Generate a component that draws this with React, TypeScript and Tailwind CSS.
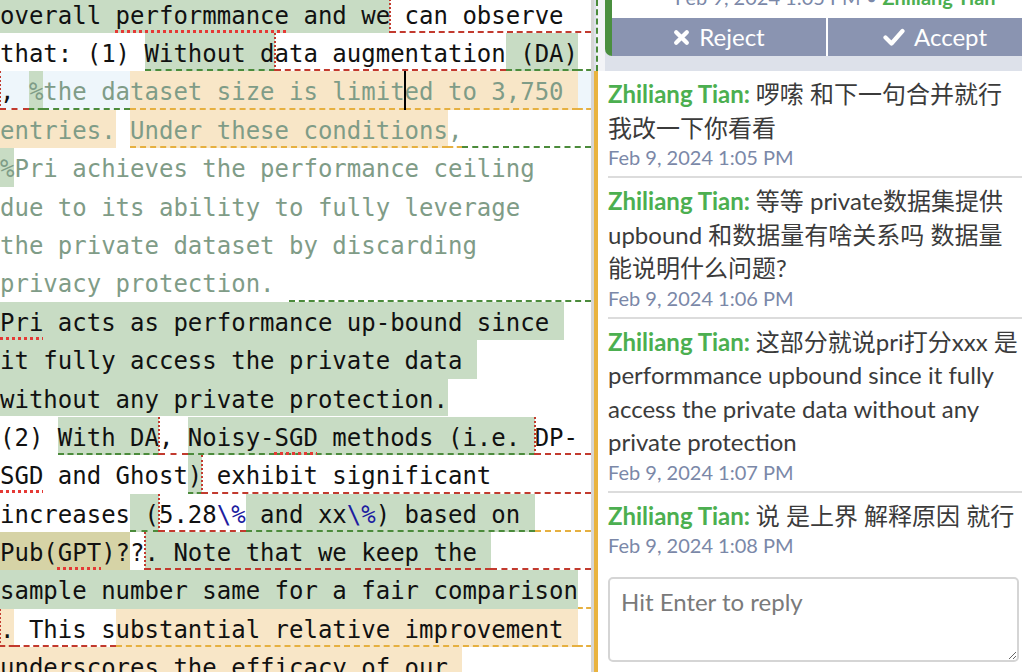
import type { ReactNode } from 'react'

// highlight + underline styles used by the track-changes view
const G = 'bg-[#c8dcc4]'
const O = 'bg-[#f8e6c7]'
const OL = 'bg-[#d6d3a6]'
const gD = 'border-b-2 border-dashed border-[#4b8b3b]'
const rD = 'border-b-2 border-dashed border-[#c23a2e]'
const oD = 'border-b-2 border-dashed border-[#e6b040]'
const sp = 'underline decoration-dotted decoration-[#e53935] decoration-[3px] underline-offset-[6px]'

function Line({ children, c = '' }: { children: ReactNode; c?: string }) {
  return <div className={`flex h-[38.4px] leading-[42px] whitespace-pre ${c}`}>{children}</div>
}

function S({ c = '', children }: { c?: string; children?: ReactNode }) {
  return <span className={c}>{children}</span>
}

// red dotted marker at the start of a deleted/changed run
const Mark = () => <span className="z-10 -mx-px w-[2px] border-l-2 border-dotted border-[#c23a2e]" />

const Pct = () => <span className="text-[#1d1da0]">\%</span>

function Editor() {
  return (
    <div className="w-[591px] shrink-0 overflow-hidden bg-white font-['DejaVu_Sans_Mono',monospace] text-[24px] text-[#111]">
      <div className="-mt-[5.4px]">
        <Line>
          <S c={G}>overall </S>
          <S c={`${G} ${sp}`}>performmance</S>
          <S c={G}> and we</S>
          <Mark />
          <S c={`${rD} flex-1`}> can observe</S>
        </Line>
        <Line>
          <S>that: (1) </S>
          <S c={`${G} ${gD}`}>Without d</S>
          <Mark />
          <S c={rD}>ata augmentation</S>
          <S c={`${G} ${gD}`}> (DA)</S>
          <S c={`${gD} flex-1`} />
        </Line>
        <Line c="bg-[#eef6fb]">
          <Mark />
          <S c={rD}>, </S>
          <S c={`${G} ${gD} text-[#7f9c87]`}>%</S>
          <S c={`${gD} text-[#7f9c87]`}>the da</S>
          <S c={`${O} ${oD} text-[#7f9c87]`}>taset size is limit</S>
          <span className="z-10 -mx-px w-[2px] bg-black" />
          <S c={`${O} ${oD} text-[#7f9c87]`}>ed to 3,750 </S>
          <S c={`${oD} flex-1`} />
        </Line>
        <Line c="text-[#7f9c87]">
          <S c={O}>entries.</S>
          <S> </S>
          <S c={`${O} ${oD}`}>Under these conditions</S>
          <S c={oD}>,</S>
          <S c={`${gD} flex-1`} />
        </Line>
        <Line c="text-[#7f9c87]">
          <S c={G}>%</S>
          <S>Pri achieves the performance ceiling</S>
        </Line>
        <Line c="text-[#7f9c87]">
          <S>due to its ability to fully leverage</S>
        </Line>
        <Line c="text-[#7f9c87]">
          <S>the private dataset by discarding</S>
        </Line>
        <Line c="text-[#7f9c87]">
          <S>privacy protection. </S>
          <S c={`${gD} flex-1`} />
        </Line>
        <Line>
          <S c={`${G} ${sp}`}>Pri</S>
          <S c={G}> acts as performance up-bound since </S>
        </Line>
        <Line>
          <S c={G}>it fully access the private data </S>
        </Line>
        <Line c="border-b border-white">
          <S c={G}>without any private protection.</S>
        </Line>
        <Line>
          <S>(2) </S>
          <S c={`${G} ${gD}`}>With DA</S>
          <Mark />
          <S c={rD}>, </S>
          <S c={`${G} ${gD}`}>Noisy-</S>
          <S c={`${G} ${gD}`}>
            <span className={sp}>SGD</span> methods (i.e.{' '}
          </S>
          <Mark />
          <S c={`${rD} flex-1`}>DP-</S>
        </Line>
        <Line>
          <S c={sp}>SGD</S>
          <S> and Ghost</S>
          <S c={`${G} ${gD}`}>)</S>
          <Mark />
          <S c={`${rD} flex-1`}> exhibit significant</S>
        </Line>
        <Line>
          <S>increases</S>
          <S c={`${G} ${gD}`}> (</S>
          <Mark />
          <S c={rD}>
            5.28<Pct />
          </S>
          <S c={`${G} ${gD}`}>
            {' '}and xx<Pct />) based on{' '}
          </S>
          <S c={`${oD} flex-1`} />
        </Line>
        <Line>
          <S c={OL}>Pub(</S>
          <S c={`${OL} ${sp}`}>GPT</S>
          <S c={OL}>)?</S>
          <S>?</S>
          <Mark />
          <S c={`${G} ${rD}`}>. Note that we keep the </S>
          <S c={`${rD} flex-1`} />
        </Line>
        <Line>
          <S c={G}>sample number same for a fair comparison</S>
          <S c={`${oD} flex-1`} />
        </Line>
        <Line>
          <Mark />
          <S c={`${O} ${rD}`}>.</S>
          <S c={rD}> This s</S>
          <S c={`${O} ${oD}`}>ubstantial relative improvement </S>
          <S c={`${oD} flex-1`} />
        </Line>
        <Line>
          <S c={O}>underscores the efficacy of our </S>
        </Line>
      </div>
    </div>
  )
}

const comments: { lines: string[]; date: string }[] = [
  { lines: ['啰嗦 和下一句合并就行', '我改一下你看看'], date: 'Feb 9, 2024 1:05 PM' },
  { lines: ['等等 private数据集提供', 'upbound 和数据量有啥关系吗 数据量', '能说明什么问题?'], date: 'Feb 9, 2024 1:06 PM' },
  {
    lines: ['这部分就说pri打分xxx 是', 'performmance upbound since it fully', 'access the private data without any', 'private protection'],
    date: 'Feb 9, 2024 1:07 PM',
  },
  { lines: ['说 是上界 解释原因 就行'], date: 'Feb 9, 2024 1:08 PM' },
]

function ReviewPanel() {
  return (
    <div className="min-w-0 flex-1 overflow-hidden bg-[#dde1ea] font-['Lato','Noto_Sans_CJK_SC',sans-serif]">
      <div className="flex h-[71px]">
        <div className="ml-[2px] w-[9px] shrink-0 border-l-2 border-dashed border-[#4b8b3b] bg-[#f3f4f7]" />
        <div className="flex h-[56px] w-[437px] shrink-0 flex-col overflow-hidden rounded-bl-[7px] border-l-[7px] border-[#4a8f3f] bg-white">
          <div className="h-[18px] overflow-hidden">
            <div className="-mt-[17px] pl-[63px] text-[20px] leading-[28px] whitespace-nowrap text-[#7b88a8]">
              Feb 9, 2024 1:05 PM • <span className="font-bold text-[#4caf50]">Zhiliang Tian</span>
            </div>
          </div>
          <div className="flex h-[38px] gap-[2px] bg-white text-[24px] text-white">
            <button className="flex flex-1 items-center justify-center gap-[9px] bg-[#8a94b1]">
              <svg width="17" height="17" viewBox="0 0 16 16">
                <path d="M3 3l10 10M13 3L3 13" stroke="white" strokeWidth="4" strokeLinecap="round" />
              </svg>
              Reject
            </button>
            <button className="flex flex-1 items-center justify-center gap-[9px] bg-[#8a94b1]">
              <svg width="22" height="18" viewBox="0 0 22 18">
                <path d="M2.5 9.5l6 6L19.5 3" fill="none" stroke="white" strokeWidth="4.2" strokeLinecap="round" strokeLinejoin="round" />
              </svg>
              Accept
            </button>
          </div>
        </div>
      </div>
      <div className="h-[601px] border-l-4 border-[#e9b33f] bg-white pl-[10px]">
        {comments.map((c, i) => (
          <div key={c.date} className={`w-[430px] py-[6px] ${i > 0 ? 'border-t-2 border-[#dcdcdc]' : ''}`}>
            <div className="text-[24px] leading-[33.5px] whitespace-nowrap text-[#3b3b3b]">
              {c.lines.map((l, j) => (
                <div key={j}>
                  {j === 0 && <span className="font-bold text-[#4caf50]">Zhiliang Tian: </span>}
                  {l}
                </div>
              ))}
            </div>
            <div className="text-[20px] leading-[26px] text-[#7b88a8]">{c.date}</div>
          </div>
        ))}
        <textarea
          placeholder="Hit Enter to reply"
          className="mt-[13px] h-[85px] w-[411px] rounded-[5px] border-2 border-[#d5d5d5] px-[11px] py-[8px] text-[24px] leading-[30px] text-[#333] outline-none placeholder:text-[#7a7a7a]"
        />
      </div>
    </div>
  )
}

export default function App() {
  return (
    <div className="flex h-[672px] w-[1022px] overflow-hidden bg-white">
      <Editor />
      <div className="w-[3px] shrink-0 bg-[#d6d6d6]" />
      <ReviewPanel />
    </div>
  )
}
